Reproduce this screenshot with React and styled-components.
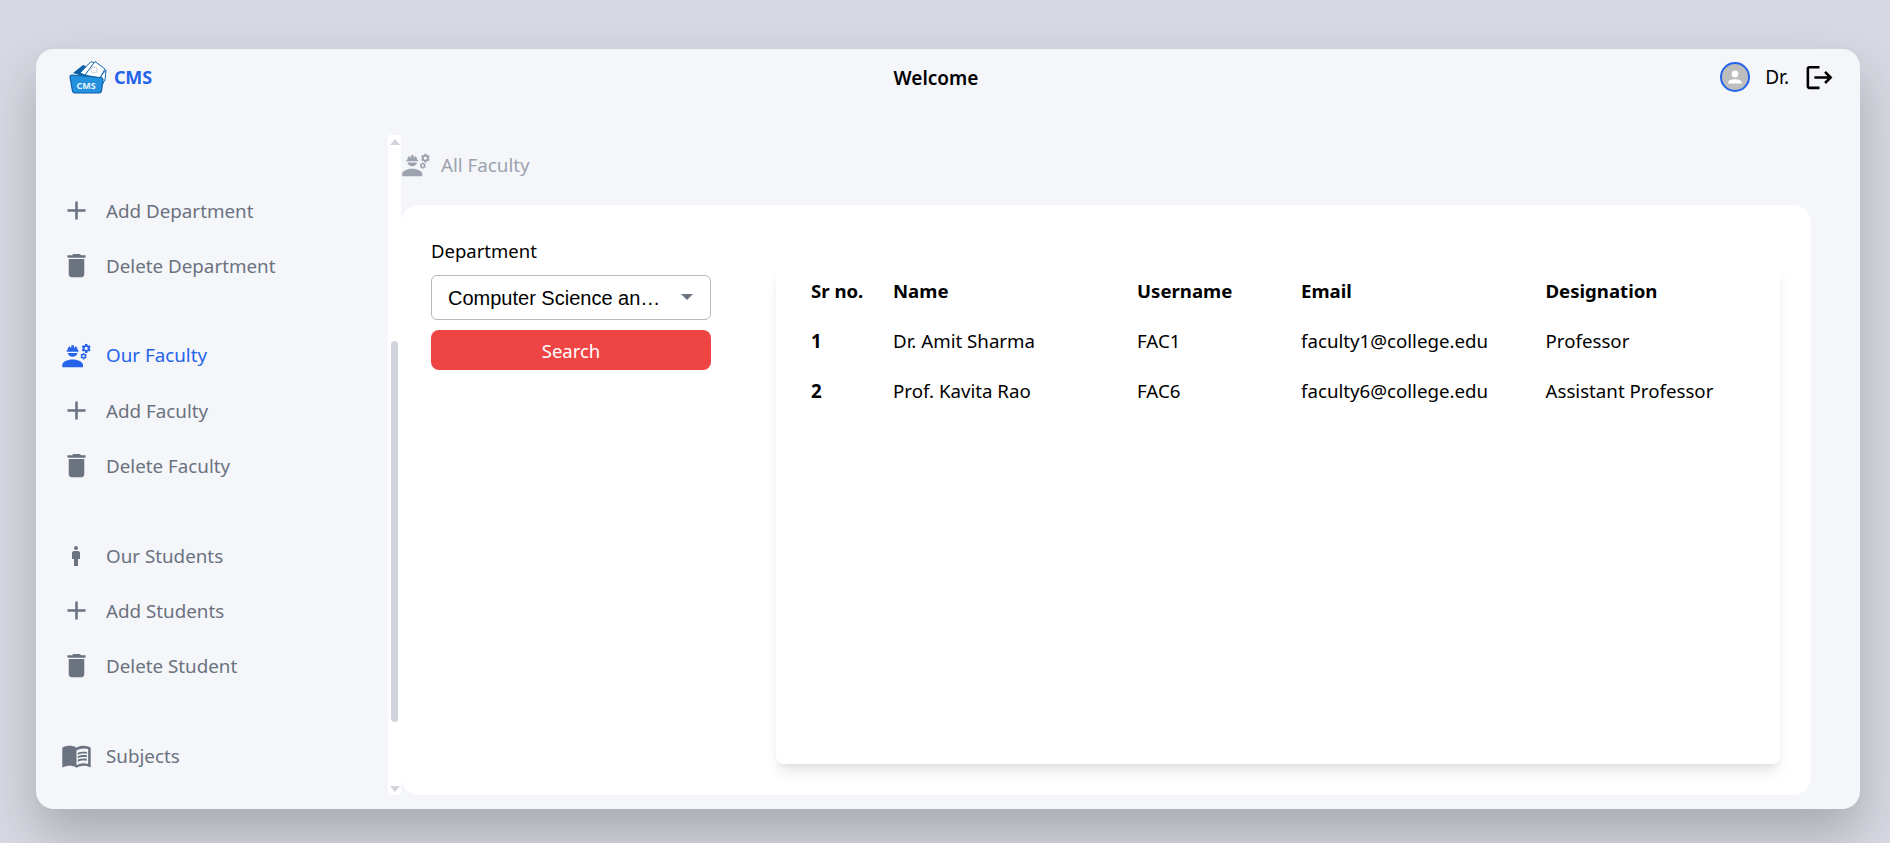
import React from "react";
import styled, { createGlobalStyle } from "styled-components";
import { MdAdd, MdDelete, MdEngineering, MdMan, MdMenuBook, MdLogout } from "react-icons/md";

const Global = createGlobalStyle`
  html, body { margin: 0; padding: 0; height: 100%; }
  body { background: #d6d9e1; font-family: "Noto Sans", "Open Sans", sans-serif; overflow: hidden; }
  #root { height: 100%; }
`;

const Page = styled.div`
  box-sizing: border-box;
  height: 843px;
  padding: 49px 30px 34px 36px;
  display: flex;
`;
const Window = styled.div`
  flex: 1;
  display: flex;
  flex-direction: column;
  background: #f4f6fa;
  border-radius: 18px;
  box-shadow: 0 25px 50px 0 rgba(0, 0, 0, 0.22);
  padding-bottom: 14px;
  min-width: 0;
`;
const Header = styled.header`
  height: 86px;
  display: grid;
  grid-template-columns: 1fr auto 1fr;
  align-items: start;
  padding: 0 25px 0 33px;
  flex: none;
`;
const Brand = styled.div`
  display: flex;
  align-items: center;
  gap: 7px;
  height: 55px;
`;
const BrandName = styled.span`
  font-size: 18px;
  font-weight: 700;
  color: #2563eb;
  letter-spacing: -0.2px;
`;
const Welcome = styled.div`
  font-size: 19px;
  font-weight: 600;
  color: #000;
  line-height: 30px;
  margin: 14px 32px 0 0;
`;
const UserArea = styled.div`
  justify-self: end;
  display: flex;
  align-items: center;
  height: 30px;
  margin-top: 13px;
`;
const Avatar = styled.div`
  box-sizing: border-box;
  width: 30px;
  height: 30px;
  border-radius: 50%;
  border: 2px solid #2563eb;
  background: #bdbdbd;
  display: flex;
  align-items: center;
  justify-content: center;
  margin-right: 15px;
  overflow: hidden;
`;
const UserName = styled.span`
  font-size: 19px;
  color: #000;
  margin-right: 15px;
`;
const Body = styled.div`
  flex: 1;
  display: flex;
  min-height: 0;
  padding-right: 49px;
`;
const Sidebar = styled.nav`
  width: 352px;
  flex: none;
  padding: 48px 0 0 0;
  box-sizing: border-box;
`;
const Group = styled.div`
  margin-bottom: 34.5px;
`;
const Item = styled.div`
  display: flex;
  align-items: center;
  height: 55.2px;
  color: ${(p) => (p.$active ? "#2563eb" : "#6b7280")};
  font-size: 18.8px;
`;
const IconSlot = styled.span`
  box-sizing: border-box;
  width: 70px;
  padding-left: 10px;
  display: flex;
  justify-content: center;
  flex: none;
  svg { display: block; }
`;
const ScrollLane = styled.div`
  width: 13px;
  flex: none;
  background: #fff;
  display: flex;
  flex-direction: column;
  align-items: center;
  justify-content: space-between;
  padding: 4px 0 3px;
  box-sizing: border-box;
`;
const ArrowUp = styled.div`
  width: 0;
  height: 0;
  border-left: 5px solid transparent;
  border-right: 5px solid transparent;
  border-bottom: 6px solid #d1d5db;
`;
const ArrowDown = styled(ArrowUp)`
  border-bottom: none;
  border-top: 6px solid #d1d5db;
`;
const Thumb = styled.div`
  width: 7px;
  height: 381px;
  border-radius: 4px;
  background: #d1d5db;
  margin-top: 191px;
  margin-bottom: 60px;
`;
const Main = styled.main`
  flex: 1;
  min-width: 0;
  display: flex;
  flex-direction: column;
`;
const PageTitle = styled.div`
  height: 70px;
  flex: none;
  box-sizing: border-box;
  padding-bottom: 10px;
  display: flex;
  align-items: center;
  gap: 10px;
  color: #9ca3af;
  font-size: 18.8px;
  svg { display: block; }
`;
const Card = styled.section`
  flex: 1;
  background: #fff;
  border-radius: 18px;
  padding: 30px 31px 31px 30px;
  display: flex;
  gap: 65px;
  min-height: 0;
`;
const Filter = styled.div`
  width: 280px;
  flex: none;
`;
const FieldLabel = styled.label`
  display: block;
  font-size: 18.5px;
  color: #000;
  line-height: 32px;
  margin-bottom: 8px;
`;
const SelectWrap = styled.div`
  position: relative;
  height: 45px;
  margin-bottom: 10px;
`;
const Select = styled.select`
  appearance: none;
  width: 100%;
  height: 100%;
  box-sizing: border-box;
  border: 1px solid #b8b8bf;
  border-radius: 6px;
  background: #fff;
  color: #000;
  font-family: "Liberation Sans", Arial, sans-serif;
  font-size: 20px;
  padding: 0 46px 0 16px;
  text-overflow: ellipsis;
  outline: none;
`;
const Caret = styled.span`
  position: absolute;
  right: 18px;
  top: 19px;
  width: 0;
  height: 0;
  border-left: 6px solid transparent;
  border-right: 6px solid transparent;
  border-top: 6px solid #6b7280;
  pointer-events: none;
`;
const SearchButton = styled.button`
  width: 100%;
  height: 40px;
  border: 0;
  border-radius: 8px;
  background: #ef4444;
  color: #fff;
  font-family: inherit;
  font-size: 18.5px;
`;
const TableCard = styled.div`
  flex: 1;
  min-width: 0;
  margin-top: 30px;
  background: #fff;
  border-radius: 8px;
  box-shadow: 0 10px 15px -3px rgba(0, 0, 0, 0.1), 0 4px 6px -2px rgba(0, 0, 0, 0.05);
  padding: 0 35px;
`;
const Table = styled.table`
  width: 100%;
  border-collapse: collapse;
  table-layout: fixed;
  font-size: 18.7px;
  color: #000;
`;
const Th = styled.th`
  height: 50px;
  padding: 0;
  text-align: left;
  font-size: 18.6px;
  font-weight: 700;
  width: ${(p) => p.$w}px;
`;
const Td = styled.td`
  height: 50px;
  padding: 0;
  font-weight: ${(p) => (p.$bold ? 700 : 400)};
`;

const rows = [
  ["1", "Dr. Amit Sharma", "FAC1", "faculty1@college.edu", "Professor"],
  ["2", "Prof. Kavita Rao", "FAC6", "faculty6@college.edu", "Assistant Professor"],
];

const groups = [
  [
    [MdAdd, "Add Department", 31],
    [MdDelete, "Delete Department", 31],
  ],
  [
    [MdEngineering, "Our Faculty", 31, true],
    [MdAdd, "Add Faculty", 31],
    [MdDelete, "Delete Faculty", 31],
  ],
  [
    [MdMan, "Our Students", 24],
    [MdAdd, "Add Students", 31],
    [MdDelete, "Delete Student", 31],
  ],
  [[MdMenuBook, "Subjects", 31]],
];

const Logo = () => (
  <svg width="38" height="34" viewBox="0 0 38 34" aria-hidden="true">
    <path d="M4 13 L14 5 L24 9 L16 17 Z" fill="#0d5fa8" />
    <path d="M11 13 L22 1.5 L26 3.5 L16 15 Z" fill="#fff" stroke="#1168b3" strokeWidth="1" />
    <path d="M16 15 L26 1.5 L36 9 L31 18 Z" fill="#fff" stroke="#1168b3" strokeWidth="1" />
    <circle cx="25" cy="10" r="3.2" fill="none" stroke="#b7c3cf" strokeWidth="0.8" />
    <path d="M32 16 L37 10 L36 20 L33 25 Z" fill="#fff" stroke="#1168b3" strokeWidth="1" />
    <path d="M1 17 Q1 15 3 15 L31 17.5 Q34.5 18 34 20 L32.5 30.5 Q32.2 33 30 33 L6 33 Q4 33 3.5 31 Z" fill="#2391dd" stroke="#0d5fa8" strokeWidth="1.2" />
    <text x="7.5" y="28.5" fontSize="9" fontWeight="700" fill="#e8f6ff" fontFamily="Noto Sans, sans-serif">CMS</text>
  </svg>
);

const AvatarFigure = () => (
  <svg width="22" height="22" viewBox="0 0 22 22" aria-hidden="true">
    <circle cx="11" cy="8" r="3.4" fill="#fff" />
    <path d="M4 17.5 Q4 13.2 11 13.2 Q18 13.2 18 17.5 Z" fill="#fff" />
  </svg>
);

export default function App() {
  return (
    <>
      <Global />
      <Page>
        <Window>
          <Header>
            <Brand>
              <Logo />
              <BrandName>CMS</BrandName>
            </Brand>
            <Welcome>Welcome</Welcome>
            <UserArea>
              <Avatar><AvatarFigure /></Avatar>
              <UserName>Dr.</UserName>
              <MdLogout size={31} color="#000" />
            </UserArea>
          </Header>
          <Body>
            <Sidebar>
              {groups.map((g, i) => (
                <Group key={i}>
                  {g.map(([Icon, label, size, active]) => (
                    <Item key={label} $active={active}>
                      <IconSlot><Icon size={size} /></IconSlot>
                      {label}
                    </Item>
                  ))}
                </Group>
              ))}
            </Sidebar>
            <ScrollLane>
              <ArrowUp />
              <Thumb />
              <ArrowDown />
            </ScrollLane>
            <Main>
              <PageTitle>
                <MdEngineering size={30} />
                All Faculty
              </PageTitle>
              <Card>
                <Filter>
                  <FieldLabel htmlFor="dept">Department</FieldLabel>
                  <SelectWrap>
                    <Select id="dept" defaultValue="cse">
                      <option value="cse">Computer Science and Engineering</option>
                    </Select>
                    <Caret />
                  </SelectWrap>
                  <SearchButton>Search</SearchButton>
                </Filter>
                <TableCard>
                  <Table>
                    <thead>
                      <tr>
                        <Th $w={82}>Sr no.</Th>
                        <Th $w={244}>Name</Th>
                        <Th $w={164}>Username</Th>
                        <Th $w={244.5}>Email</Th>
                        <Th>Designation</Th>
                      </tr>
                    </thead>
                    <tbody>
                      {rows.map((r) => (
                        <tr key={r[0]}>
                          <Td $bold>{r[0]}</Td>
                          <Td>{r[1]}</Td>
                          <Td>{r[2]}</Td>
                          <Td>{r[3]}</Td>
                          <Td>{r[4]}</Td>
                        </tr>
                      ))}
                    </tbody>
                  </Table>
                </TableCard>
              </Card>
            </Main>
          </Body>
        </Window>
      </Page>
    </>
  );
}
